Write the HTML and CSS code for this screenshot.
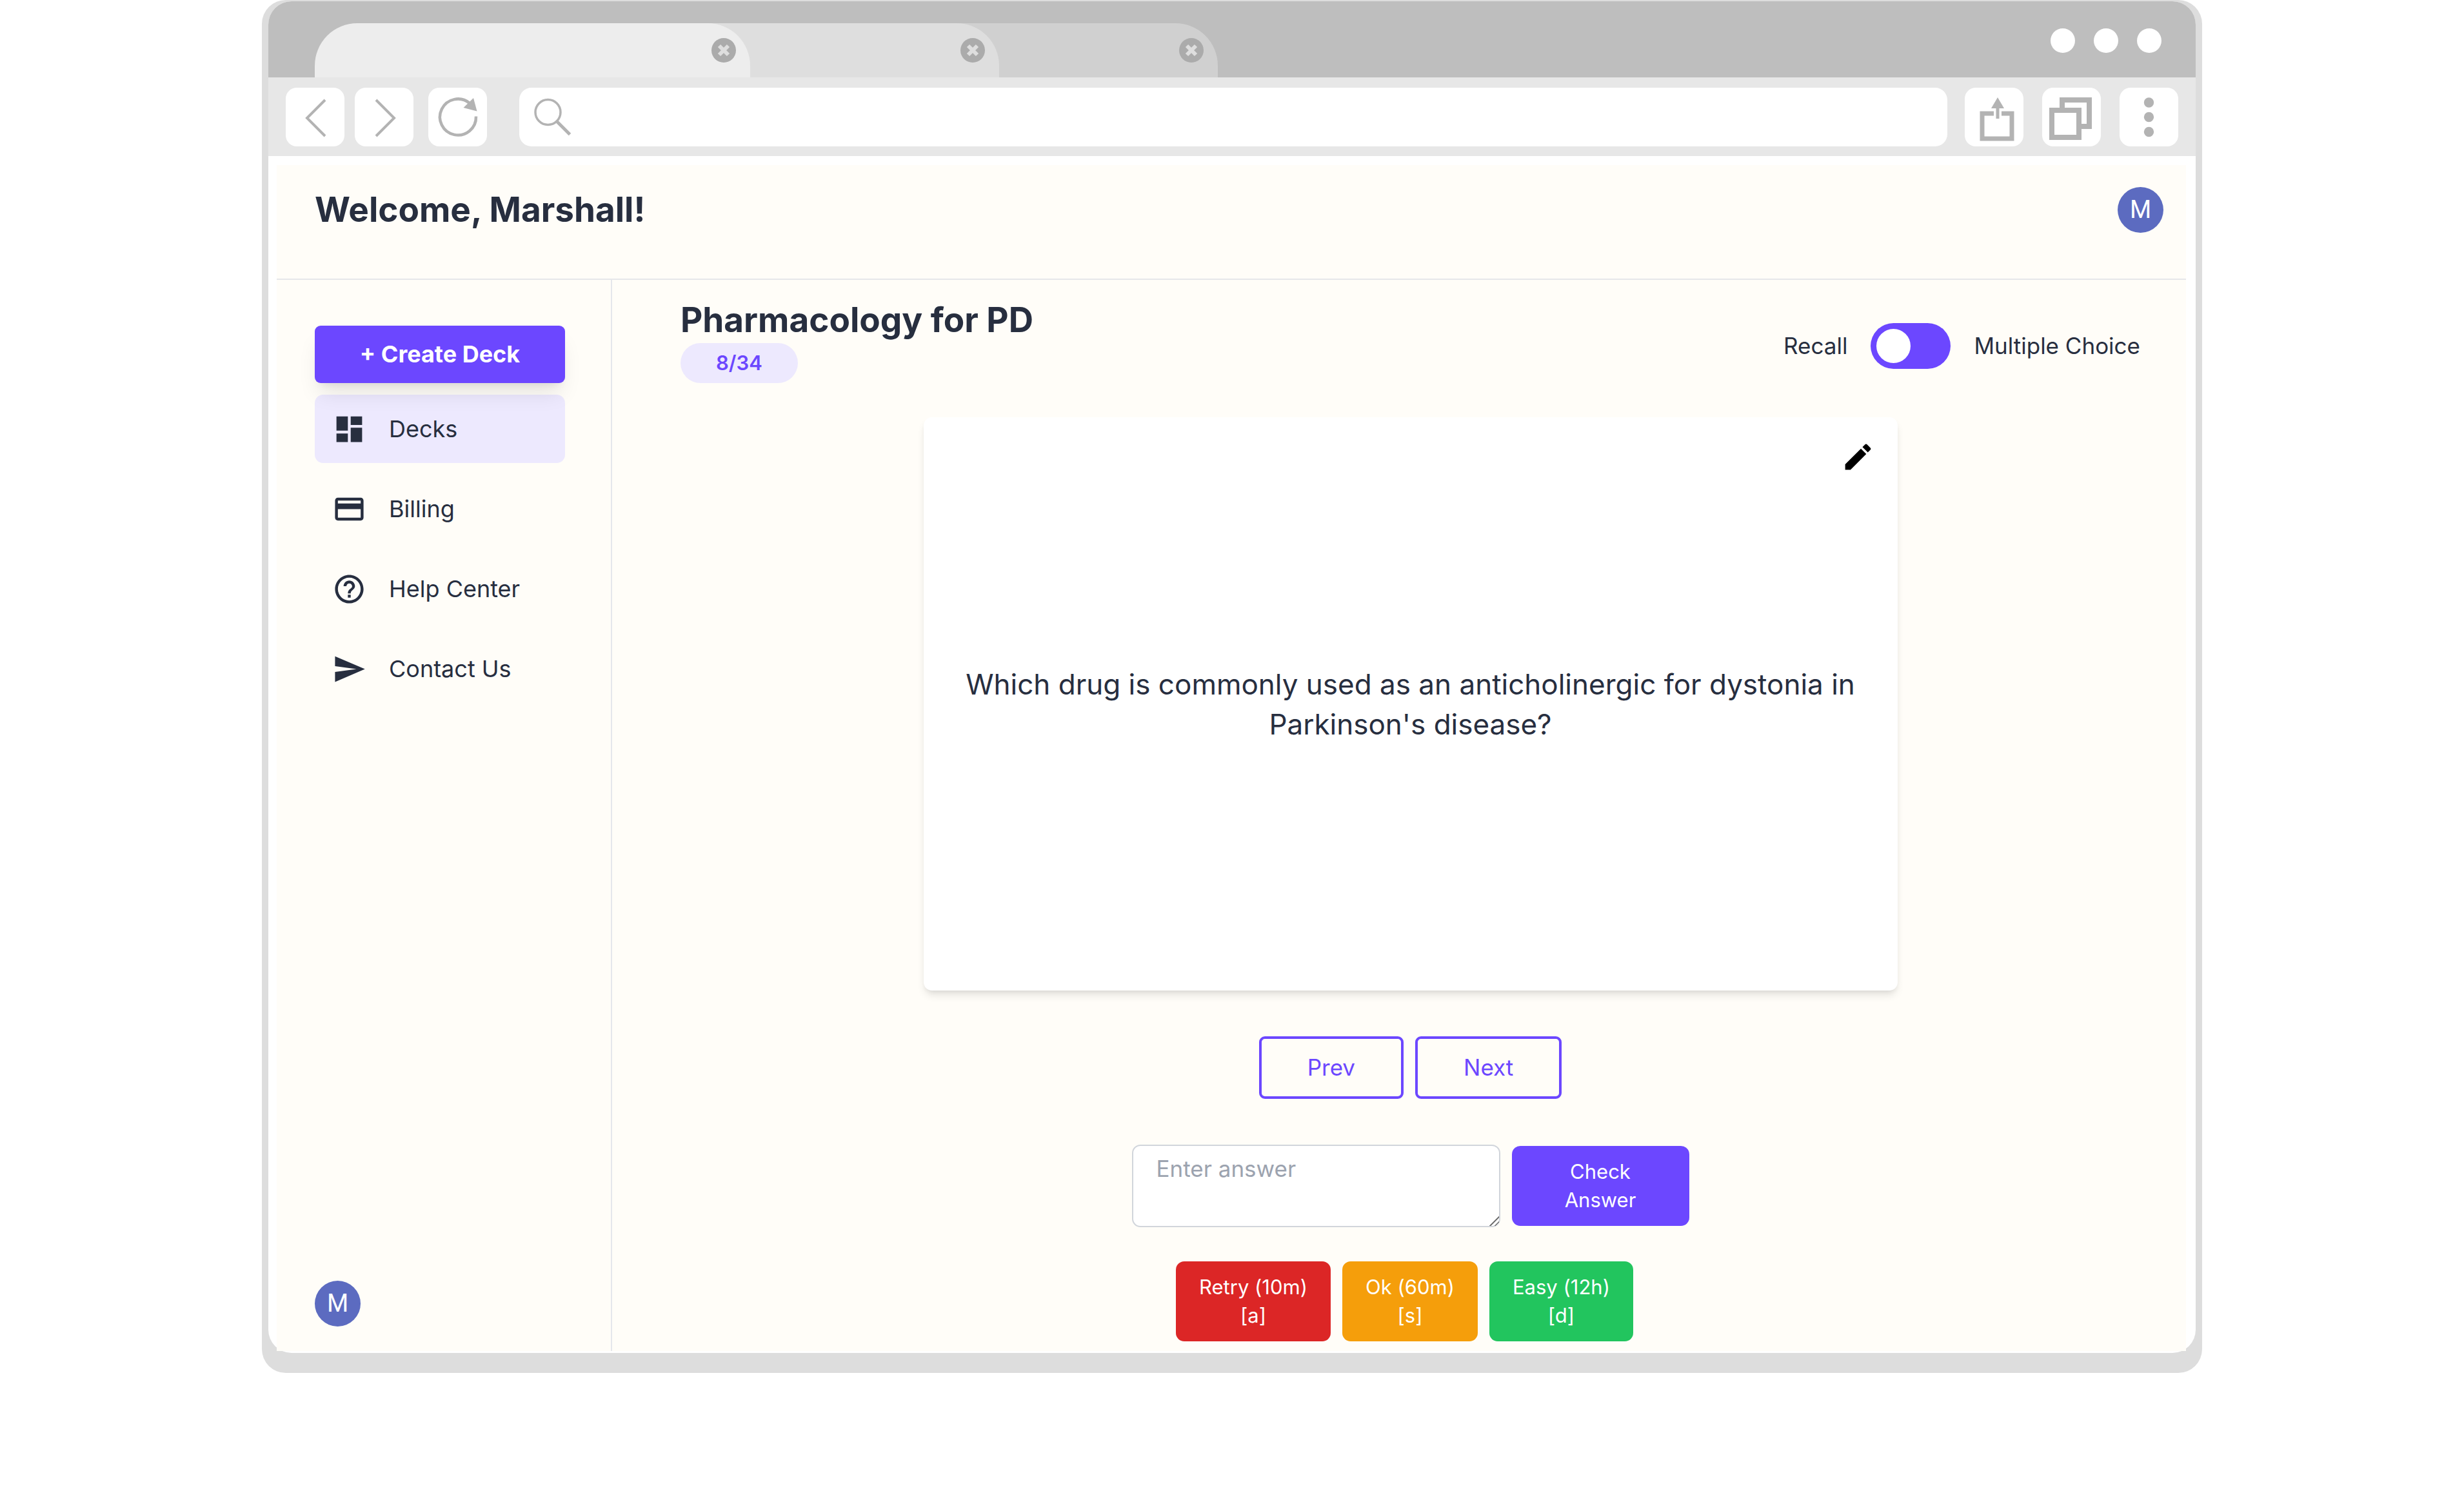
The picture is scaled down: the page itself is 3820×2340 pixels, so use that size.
FILE: index.html
```html
<!DOCTYPE html>
<html lang="en">
<head>
<meta charset="utf-8">
<meta name="viewport" content="width=device-width, initial-scale=1">
<title>Pharmacology for PD</title>
<link rel="stylesheet" href="styles.css">
</head>
<body>
<div class="browser">
  <div class="browser-inner">
    <div class="titlebar">
      <div class="tabs">
        <div class="tab tab-first"><button class="tab-close" aria-label="Close tab"><svg viewBox="0 0 38 38"><circle cx="19" cy="19" r="19" fill="#ababab"/><path d="M12 12L26 26M26 12L12 26" stroke="#dedede" stroke-width="6"/></svg></button></div>
        <div class="tab tab-second"><button class="tab-close" aria-label="Close tab"><svg viewBox="0 0 38 38"><circle cx="19" cy="19" r="19" fill="#ababab"/><path d="M12 12L26 26M26 12L12 26" stroke="#dedede" stroke-width="6"/></svg></button></div>
        <div class="tab tab-third"><button class="tab-close" aria-label="Close tab"><svg viewBox="0 0 38 38"><circle cx="19" cy="19" r="19" fill="#ababab"/><path d="M12 12L26 26M26 12L12 26" stroke="#dedede" stroke-width="6"/></svg></button></div>
      </div>
      <div class="window-dots">
        <button class="dot" aria-label="Minimize"></button>
        <button class="dot" aria-label="Maximize"></button>
        <button class="dot" aria-label="Close"></button>
      </div>
    </div>

    <div class="toolbar">
      <div class="tool-group history">
        <button class="tool" aria-label="Back"><svg viewBox="0 0 91 91"><path d="M61 19L33 47L61 75" fill="none" stroke="#b3b3b3" stroke-width="4"/></svg></button>
        <button class="tool" aria-label="Forward"><svg viewBox="0 0 91 91"><path d="M33 19L61 47L33 75" fill="none" stroke="#b3b3b3" stroke-width="4"/></svg></button>
      </div>
      <button class="tool" aria-label="Reload"><svg viewBox="0 0 91 91"><path d="M74 44.500A28 28 0 1 1 64 24" fill="none" stroke="#b3b3b3" stroke-width="4.500"/><path d="M70 16L54.500 31L75.500 36.500Z" fill="#b3b3b3"/></svg></button>
      <label class="address">
        <svg viewBox="0 0 91 91"><circle cx="44.500" cy="38" r="19.500" fill="none" stroke="#b3b3b3" stroke-width="3.500"/><path d="M58 52L78.500 72.500" stroke="#b3b3b3" stroke-width="5"/></svg>
        <input type="text" aria-label="Address">
      </label>
      <div class="tool-group actions">
        <button class="tool" aria-label="Share"><svg viewBox="0 0 91 91"><path d="M45 40H27V79H73V40H57" fill="none" stroke="#b3b3b3" stroke-width="7"/><path d="M51 15L61 32H53.500V48H48.500V32H41Z" fill="#b3b3b3"/></svg></button>
        <button class="tool" aria-label="Windows"><svg viewBox="0 0 91 91"><path d="M15 35H57V77H15ZM31 31V19H73V60H61" fill="none" stroke="#b3b3b3" stroke-width="8"/></svg></button>
        <button class="tool" aria-label="Menu"><svg viewBox="0 0 91 91" fill="#b3b3b3"><circle cx="45.500" cy="23" r="7.700"/><circle cx="45.500" cy="45.500" r="7.700"/><circle cx="45.500" cy="68.500" r="7.700"/></svg></button>
      </div>
    </div>

    <div class="app">
      <header class="app-header">
        <h1 class="heading">Welcome, Marshall!</h1>
        <button class="avatar">M</button>
      </header>
      <div class="app-body">
        <aside class="sidebar">
          <button class="create">+ Create Deck</button>
          <nav class="nav">
            <a class="nav-link active" href="#decks"><svg viewBox="0 0 24 24"><path d="M3 13h8V3H3v10zm0 8h8v-6H3v6zm10 0h8V11h-8v10zm0-18v6h8V3h-8z"/></svg>Decks</a>
            <a class="nav-link" href="#billing"><svg viewBox="0 0 24 24"><path d="M20 4H4c-1.110 0-1.990.890-1.990 2L2 18c0 1.110.890 2 2 2h16c1.110 0 2-.890 2-2V6c0-1.110-.890-2-2-2zm0 14H4v-6h16v6zm0-10H4V6h16v2z"/></svg>Billing</a>
            <a class="nav-link" href="#help"><svg viewBox="0 0 24 24"><path d="M11 18h2v-2h-2v2zm1-16C6.480 2 2 6.480 2 12s4.480 10 10 10 10-4.480 10-10S17.520 2 12 2zm0 18c-4.410 0-8-3.590-8-8s3.590-8 8-8 8 3.590 8 8-3.590 8-8 8zm0-14c-2.210 0-4 1.790-4 4h2c0-1.100.900-2 2-2s2 .900 2 2c0 2-3 1.750-3 5h2c0-2.250 3-2.500 3-5 0-2.210-1.790-4-4-4z"/></svg>Help Center</a>
            <a class="nav-link" href="#contact"><svg viewBox="0 0 24 24"><path d="M2.010 21L23 12 2.010 3 2 10l15 2-15 2z"/></svg>Contact Us</a>
          </nav>
          <button class="avatar sidebar-avatar">M</button>
        </aside>

        <main class="study">
          <div class="study-head">
            <div class="deck-title">
              <h2 class="heading">Pharmacology for PD</h2>
              <span class="progress">8/34</span>
            </div>
            <label class="mode">
              <span>Recall</span>
              <input class="switch" type="checkbox" role="switch">
              <span>Multiple Choice</span>
            </label>
          </div>

          <section class="card">
            <button class="edit" aria-label="Edit card"><svg viewBox="0 0 24 24"><path d="M3 17.250V21h3.750L17.810 9.940l-3.750-3.750L3 17.250zM20.710 7.040c.390-.390.390-1.020 0-1.410l-2.340-2.340c-.390-.390-1.020-.390-1.410 0l-1.830 1.830 3.750 3.750 1.830-1.830z"/></svg></button>
            <p class="question">Which drug is commonly used as an anticholinergic for dystonia in Parkinson's disease?</p>
          </section>

          <div class="row pager">
            <button class="outline">Prev</button>
            <button class="outline">Next</button>
          </div>

          <form class="row answer">
            <textarea class="answer-box" aria-label="Answer" placeholder="Enter answer"></textarea>
            <button class="solid check" type="button">Check Answer</button>
          </form>

          <div class="row ratings">
            <button class="solid retry">Retry (10m)<br>[a]</button>
            <button class="solid ok">Ok (60m)<br>[s]</button>
            <button class="solid easy">Easy (12h)<br>[d]</button>
          </div>
        </main>
      </div>
    </div>
  </div>
</div>
</body>
</html>
```
FILE: styles.css
```css
*,
*::before,
*::after {
  box-sizing: border-box;
}

body {
  margin: 0;
  padding: 0 406px;
  background: #fff;
  color: #272e3f;
  font-family: Inter, "Liberation Sans", sans-serif;
  font-size: 35px;
  line-height: 53px;
}

h1,
h2,
p {
  margin: 0;
}

button,
input,
textarea {
  margin: 0;
  padding: 0;
  border: 0;
  background: none;
  color: inherit;
  font: inherit;
}

button {
  cursor: pointer;
}

svg {
  display: block;
  flex: none;
}

/* Browser frame */
.browser {
  padding: 2px 10px 31px 10px;
  border-radius: 37px;
  background: #ddd;
}

.browser-inner {
  display: flex;
  flex-direction: column;
  padding-bottom: 3px;
  border-radius: 36px;
  background: #fff;
}

.titlebar {
  display: flex;
  justify-content: space-between;
  padding: 34px 53px 0 72px;
  border-radius: 36px 36px 0 0;
  background: #bebebe;
}

.tabs {
  display: flex;
  isolation: isolate;
}

.tab {
  display: flex;
  align-items: center;
  justify-content: flex-end;
  height: 84px;
  padding-right: 22px;
  border-radius: 66px 66px 0 0;
}

.tab + .tab {
  margin-left: -66px;
  border-top-left-radius: 0;
}

.tab-first {
  z-index: 3;
  width: 675px;
  background: #ededed;
}

.tab-second {
  z-index: 2;
  width: 452px;
  background: #dedede;
}

.tab-third {
  z-index: 1;
  width: 405px;
  background: #d0d0d0;
}

.tab-close,
.dot {
  width: 38px;
  height: 38px;
  border-radius: 50%;
}

.window-dots {
  display: flex;
  gap: 29px;
  padding-top: 8px;
}

.dot {
  background: #fff;
}

.toolbar {
  display: flex;
  padding: 16px 27px 15px;
  background: #e7e7e7;
}

.tool-group {
  display: flex;
}

.history {
  gap: 16px;
  margin-right: 23px;
}

.actions {
  gap: 29px;
}

.tool {
  width: 91px;
  height: 91px;
  border-radius: 17px;
  background: #fff;
}

.address {
  display: flex;
  flex: 1;
  margin: 0 27px 0 50px;
  border-radius: 19px;
  background: #fff;
}

.address svg {
  width: 91px;
  height: 91px;
}

.address input {
  flex: 1;
  outline: 0;
}

/* App shell */
.app {
  margin: 14px 15px 0 13px;
  background: #fffdf8;
}

.app-header {
  display: flex;
  align-items: center;
  justify-content: space-between;
  padding: 34px 35px 71px 59px;
  border-bottom: 2px solid #e6e7ea;
}

.heading {
  font-size: 53px;
  font-weight: 700;
  line-height: 71px;
}

.avatar {
  width: 71px;
  height: 71px;
  border-radius: 50%;
  background: #5c6bc0;
  color: #fff;
  font-family: Roboto, sans-serif;
  font-size: 38px;
  line-height: 71px;
}

.app-body {
  display: flex;
}

.sidebar {
  display: flex;
  flex: none;
  flex-direction: column;
  width: 520px;
  padding: 71px 71px 38px 59px;
  border-right: 2px solid #e5e7eb;
  font-size: 36px;
}

.create {
  position: relative;
  height: 89px;
  margin-bottom: 18px;
  border-radius: 9px;
  background: #6c47ff;
  box-shadow: 0 22px 33px -7px rgb(0 0 0 / 10%), 0 9px 13px -9px rgb(0 0 0 / 10%);
  color: #fff;
  font-weight: 700;
}

.nav {
  display: flex;
  flex-direction: column;
  gap: 18px;
}

.nav-link {
  display: flex;
  align-items: center;
  gap: 35px;
  height: 106px;
  padding: 0 27px;
  border-radius: 13px;
  color: inherit;
  text-decoration: none;
}

.nav-link.active {
  background: #ede9fe;
}

.nav-link svg,
.edit svg {
  width: 53px;
  height: 53px;
  fill: currentColor;
}

.sidebar-avatar {
  margin-top: auto;
}

/* Study area */
.study {
  display: flex;
  flex: 1;
  flex-direction: column;
  align-items: center;
  padding: 27px 71px 15px 106px;
}

.study-head {
  display: flex;
  align-items: center;
  align-self: stretch;
  justify-content: space-between;
  margin-bottom: 53px;
}

.deck-title {
  display: flex;
  flex-direction: column;
  align-items: flex-start;
}

.progress {
  padding: 9px 55px;
  border-radius: 31px;
  background: #ede9fe;
  color: #6c47ff;
  font-size: 31px;
  font-weight: 600;
  line-height: 44px;
}

.mode {
  display: flex;
  align-items: center;
  gap: 36px;
  margin-top: 18px;
}

.switch {
  display: flex;
  align-items: center;
  width: 124px;
  height: 71px;
  padding: 0 9px;
  border-radius: 36px;
  background: #6c47ff;
  appearance: none;
}

.switch::before {
  width: 53px;
  height: 53px;
  border-radius: 50%;
  background: #fff;
  content: "";
}

.switch:checked {
  justify-content: flex-end;
}

.card {
  display: flex;
  flex-direction: column;
  width: 100%;
  max-width: 1510px;
  min-height: 889px;
  padding: 35px;
  border-radius: 13px;
  background: #fff;
  box-shadow: 0 9px 13px -2px rgb(0 0 0 / 10%), 0 4px 9px -4px rgb(0 0 0 / 10%);
}

.edit {
  align-self: flex-end;
  color: #000;
}

.question {
  margin: auto 0;
  padding-bottom: 53px;
  font-size: 44px;
  line-height: 62px;
  text-align: center;
}

.row {
  display: flex;
  align-items: center;
  justify-content: center;
  gap: 18px;
}

.pager {
  margin-top: 71px;
}

.outline {
  height: 97px;
  padding: 0 71px;
  border: 4px solid #6c47ff;
  border-radius: 9px;
  color: #6c47ff;
}

.answer {
  margin-top: 71px;
}

.answer-box {
  width: 571px;
  height: 128px;
  padding: 9px 36px;
  border: 2px solid #d1d5db;
  border-radius: 13px;
  background: #fff;
}

.answer-box::placeholder {
  color: #9ca3af;
}

.answer-box::-webkit-resizer {
  background: linear-gradient(135deg, transparent 50%, #777 50%, #777 57%, transparent 57%, transparent 75%, #777 75%, #777 82%, transparent 82%);
}

.solid {
  padding: 18px 36px;
  border-radius: 13px;
  color: #fff;
  font-size: 31px;
  line-height: 44px;
}

.check {
  width: 275px;
  background: #6c47ff;
}

.ratings {
  margin-top: 53px;
  margin-right: 18px;
}

.retry {
  background: #dc2626;
}

.ok {
  background: #f59e0b;
}

.easy {
  background: #22c55e;
}
```
